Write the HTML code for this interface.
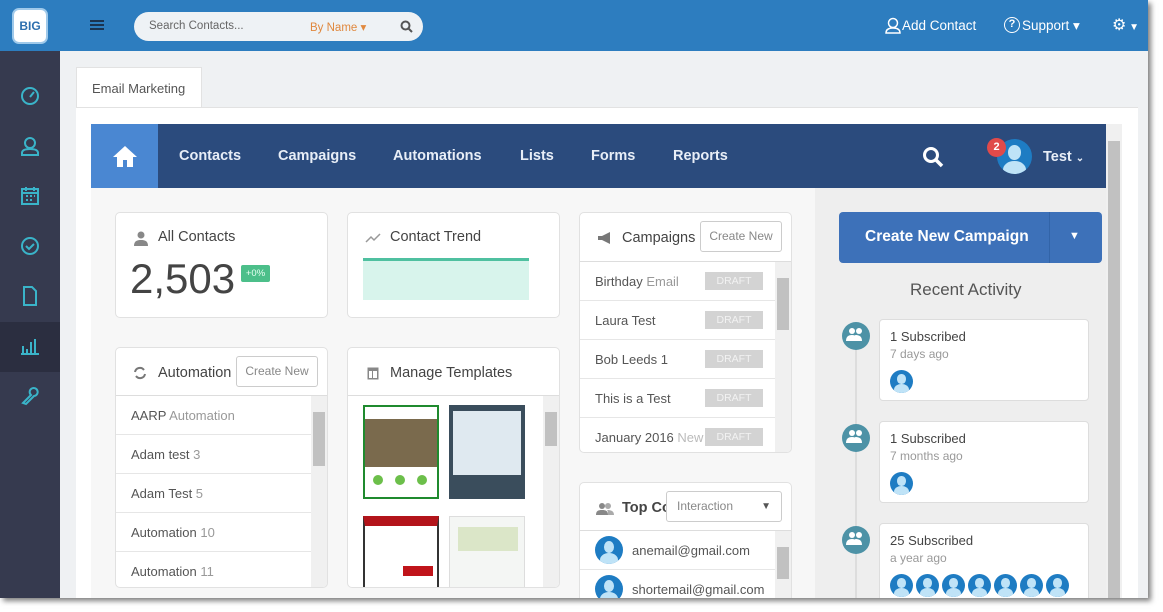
<!DOCTYPE html>
<html><head><meta charset="utf-8"><style>
*{box-sizing:border-box;margin:0;padding:0}
body{width:1163px;height:612px;background:#fff;font-family:"Liberation Sans",sans-serif;position:relative;overflow:hidden}
.frame{position:absolute;left:0;top:0;width:1148px;height:598px;overflow:hidden;background:#eff1f3;box-shadow:3px 3px 5px rgba(0,0,0,.5)}
.a{position:absolute}
.top{left:0;top:0;width:1148px;height:51px;background:#2d7dbf}
.side{left:0;top:51px;width:60px;height:547px;background:#363a4f}
.card{position:absolute;background:#fff;border:1px solid #e1e1e1;border-radius:5px;overflow:hidden}
.ttl{position:absolute;font-size:14.5px;color:#444}
.btn{position:absolute;border:1px solid #ccc;border-radius:3px;background:#fff;color:#888;font-size:12px;text-align:center;line-height:29px}
.row{position:absolute;left:0;height:39px;border-bottom:1px solid #e6e6e6;font-size:13px;color:#555;line-height:39px;padding-left:15px;white-space:nowrap}
.draft{position:absolute;left:125px;top:10px;width:58px;height:18px;background:#d3d3d3;color:#f2f2f2;font-size:10.5px;text-align:center;line-height:18px}
.sb{position:absolute;background:#f0f0f0}
.sb i{position:absolute;left:2px;right:2px;background:#c1c1c1}
.av{position:absolute;border-radius:50%;background:#1e7cc3;overflow:hidden}
.av:before{content:"";position:absolute;left:32%;top:18%;width:36%;height:42%;border-radius:50%;background:#bfe3f7}
.av:after{content:"";position:absolute;left:18%;top:62%;width:64%;height:50%;border-radius:50% 50% 0 0;background:#bfe3f7}
.nav{font-size:14.5px;color:#e8eef7;font-weight:bold;top:148px}
.tl{position:absolute;width:28px;height:28px;border-radius:50%;background:#4d92a6}
.tc{position:absolute;left:879px;width:210px;height:82px;background:#fff;border:1px solid #ddd;border-radius:4px;padding:9px 10px}
.tc b{font-weight:normal;font-size:13px;color:#444;display:block}
.tc s{text-decoration:none;font-size:12px;color:#999;display:block;margin-top:3px}
.si{position:absolute;left:20px}
</style></head><body>
<div class="frame">
<div class="a top"></div>
<div class="a" style="left:12px;top:8px;width:36px;height:36px;border-radius:7px;background:#fff;border:2px solid #9fc9ea;color:#2d6fae;font-size:12px;font-weight:bold;text-align:center;line-height:32px">BIG</div>
<div class="a" style="left:90px;top:20px;width:14px;height:2px;background:#1b3350;box-shadow:0 4px #1b3350,0 8px #1b3350"></div>
<div class="a" style="left:134px;top:12px;width:289px;height:29px;border-radius:15px;background:#eef2f5"></div>
<div class="a" style="left:149px;top:20px;font-size:11.5px;color:#666">Search Contacts...</div>
<div class="a" style="left:310px;top:20px;font-size:11.5px;color:#e0883e">By Name ▾</div>
<svg class="a" style="left:400px;top:20px" width="13" height="13" viewBox="0 0 13 13"><circle cx="5.5" cy="5.5" r="4" fill="none" stroke="#555" stroke-width="2"/><path d="M8.5 8.5 12 12" stroke="#555" stroke-width="2"/></svg>
<svg class="a" style="left:885px;top:17px" width="16" height="17" viewBox="0 0 16 17"><circle cx="8" cy="6" r="4.5" fill="none" stroke="#fff" stroke-width="1.5"/><path d="M1 16c0-4 3-5 7-5s7 1 7 5z" fill="none" stroke="#fff" stroke-width="1.5"/></svg>
<div class="a" style="left:902px;top:18px;font-size:13.5px;color:#fff">Add Contact</div>
<div class="a" style="left:1004px;top:17px;width:16px;height:16px;border:1.5px solid #fff;border-radius:50%;color:#fff;font-size:11px;text-align:center;line-height:13px;font-weight:bold">?</div>
<div class="a" style="left:1022px;top:18px;font-size:13.5px;color:#fff">Support ▾</div>
<div class="a" style="left:1112px;top:15px;font-size:16px;color:#fff">⚙<span style="font-size:10px"> ▼</span></div>
<div class="a side"></div>
<div class="a" style="left:0;top:322px;width:60px;height:50px;background:#2b2e40"></div>
<svg class="si" style="top:86px" width="20" height="20" viewBox="0 0 20 20" fill="none" stroke="#3ab4c9" stroke-width="2"><circle cx="10" cy="10" r="8"/><path d="M10 11l4-5"/></svg>
<svg class="si" style="top:136px" width="20" height="20" viewBox="0 0 20 20" fill="none" stroke="#3ab4c9" stroke-width="2"><circle cx="10" cy="7" r="5"/><path d="M2 19v-2c0-3 4-4 8-4s8 1 8 4v2z"/></svg>
<svg class="si" style="top:186px" width="20" height="20" viewBox="0 0 20 20" fill="none" stroke="#3ab4c9" stroke-width="2"><rect x="2" y="3" width="16" height="15"/><path d="M2 7h16M6 1v4M14 1v4M6 10h2M10 10h2M14 10h1M6 14h2M10 14h2"/></svg>
<svg class="si" style="top:236px" width="20" height="20" viewBox="0 0 20 20" fill="none" stroke="#3ab4c9" stroke-width="2"><circle cx="10" cy="10" r="8"/><path d="M6 10l3 3 5-5"/></svg>
<svg class="si" style="top:286px" width="20" height="20" viewBox="0 0 20 20" fill="none" stroke="#3ab4c9" stroke-width="2"><path d="M4 1h8l4 4v14H4z"/></svg>
<svg class="si" style="top:336px" width="20" height="20" viewBox="0 0 20 20" fill="none" stroke="#3ab4c9" stroke-width="2"><path d="M1 18h18M3 10v8M7 13v5M11 6v12M15 3v15"/></svg>
<svg class="si" style="top:386px" width="20" height="20" viewBox="0 0 20 20" fill="none" stroke="#3ab4c9" stroke-width="2"><path d="M3 17l8-8a4 4 0 1 1 3 1l-8 8z"/></svg>
<div class="a" style="left:76px;top:67px;width:126px;height:41px;background:#fff;border:1px solid #e2e2e2;border-bottom:none;font-size:13px;color:#555;padding:13px 0 0 15px">Email Marketing</div>
<div class="a" style="left:76px;top:107px;width:1062px;height:500px;background:#fff;border-top:1px solid #e2e2e2"></div>
<div class="a" style="left:91px;top:124px;width:1015px;height:64px;background:#2b4b7d"></div>
<div class="a" style="left:91px;top:124px;width:67px;height:64px;background:#4a87d2"></div>
<svg class="a" style="left:112px;top:144px" width="26" height="24" viewBox="0 0 26 24"><path d="M13 2 1 13h4v10h6v-7h4v7h6V13h4z" fill="#fff"/></svg>
<div class="a nav" style="left:179px">Contacts</div>
<div class="a nav" style="left:278px">Campaigns</div>
<div class="a nav" style="left:393px">Automations</div>
<div class="a nav" style="left:520px">Lists</div>
<div class="a nav" style="left:591px">Forms</div>
<div class="a nav" style="left:673px">Reports</div>
<svg class="a" style="left:922px;top:146px" width="22" height="22" viewBox="0 0 22 22"><circle cx="9" cy="9" r="6.5" fill="none" stroke="#fff" stroke-width="3"/><path d="M14 14l6 6" stroke="#fff" stroke-width="3.5"/></svg>
<div class="av" style="left:997px;top:139px;width:35px;height:35px"></div>
<div class="a" style="left:987px;top:138px;width:19px;height:19px;border-radius:50%;background:#e04a4a;color:#fff;font-size:11px;font-weight:bold;text-align:center;line-height:19px">2</div>
<div class="a nav" style="left:1043px;top:149px">Test <span style="font-size:10px">⌄</span></div>
<div class="a" style="left:1106px;top:124px;width:16px;height:480px;background:#f0f0f0"></div>
<div class="a" style="left:1108px;top:141px;width:12px;height:470px;background:#c1c1c1"></div>
<div class="a" style="left:91px;top:188px;width:724px;height:420px;background:#f7f7f7"></div>
<div class="a" style="left:815px;top:188px;width:291px;height:420px;background:#eeeeee"></div>

<div class="card" style="left:115px;top:212px;width:213px;height:106px">
<svg class="a" style="left:18px;top:18px" width="14" height="15" viewBox="0 0 14 15"><circle cx="7" cy="4" r="3.5" fill="#888"/><path d="M0 15c0-5 3-6 7-6s7 1 7 6z" fill="#888"/></svg>
<div class="ttl" style="left:42px;top:16px">All Contacts</div>
<div class="a" style="left:14px;top:42px;font-size:42px;color:#444">2,503</div>
<div class="a" style="left:125px;top:52px;width:29px;height:17px;background:#4cbf8a;color:#e8fff2;font-size:9.5px;text-align:center;line-height:17px;border-radius:2px">+0%</div>
</div>
<div class="card" style="left:347px;top:212px;width:213px;height:106px">
<svg class="a" style="left:17px;top:20px" width="16" height="10" viewBox="0 0 16 10"><path d="M1 9l5-5 3 3 6-6" fill="none" stroke="#999" stroke-width="1.5"/></svg>
<div class="ttl" style="left:42px;top:16px">Contact Trend</div>
<div class="a" style="left:15px;top:45px;width:166px;height:42px;background:#d8f4ec;border-top:3px solid #4fc0a0"></div>
</div>

<div class="card" style="left:579px;top:212px;width:213px;height:241px">
<svg class="a" style="left:17px;top:18px" width="16" height="14" viewBox="0 0 16 14"><path d="M1 5h4l8-4v12L5 9H1z" fill="#777"/></svg>
<div class="ttl" style="left:42px;top:17px">Campaigns</div>
<div class="btn" style="left:120px;top:8px;width:82px;height:31px">Create New</div>
<div class="a" style="left:0;top:48px;width:213px;border-top:1px solid #ddd"></div>
<div class="row" style="top:49px;width:195px">Birthday <span style="color:#999">Email</span><div class="draft">DRAFT</div></div>
<div class="row" style="top:88px;width:195px">Laura Test<div class="draft">DRAFT</div></div>
<div class="row" style="top:127px;width:195px">Bob Leeds 1<div class="draft">DRAFT</div></div>
<div class="row" style="top:166px;width:195px">This is a Test<div class="draft">DRAFT</div></div>
<div class="row" style="top:205px;width:195px;border:none">January 2016 <span style="color:#bbb">New</span><div class="draft">DRAFT</div></div>
<div class="sb" style="left:195px;top:49px;width:16px;height:190px"><i style="top:16px;height:52px"></i></div>
</div>

<div class="card" style="left:115px;top:347px;width:213px;height:241px">
<svg class="a" style="left:17px;top:18px" width="14" height="14" viewBox="0 0 14 14" fill="none" stroke="#777" stroke-width="2"><path d="M2 6a5 5 0 0 1 9-2M12 8a5 5 0 0 1-9 2"/></svg>
<div class="ttl" style="left:42px;top:17px">Automation</div>
<div class="btn" style="left:120px;top:8px;width:82px;height:31px;background:#fff">Create New</div>
<div class="a" style="left:0;top:47px;width:213px;border-top:1px solid #ddd"></div>
<div class="row" style="top:48px;width:195px">AARP <span style="color:#999">Automation</span></div>
<div class="row" style="top:87px;width:195px">Adam test <span style="color:#999">3</span></div>
<div class="row" style="top:126px;width:195px">Adam Test <span style="color:#999">5</span></div>
<div class="row" style="top:165px;width:195px">Automation <span style="color:#999">10</span></div>
<div class="row" style="top:204px;width:195px">Automation <span style="color:#999">11</span></div>
<div class="sb" style="left:195px;top:48px;width:16px;height:192px"><i style="top:16px;height:54px"></i></div>
</div>

<div class="card" style="left:347px;top:347px;width:213px;height:241px">
<svg class="a" style="left:19px;top:19px" width="12" height="13" viewBox="0 0 12 13"><rect x="0.5" y="0.5" width="11" height="12" fill="#888"/><rect x="2" y="4" width="3" height="7" fill="#fff"/><rect x="6" y="4" width="4" height="7" fill="#fff"/></svg>
<div class="ttl" style="left:42px;top:17px">Manage Templates</div>
<div class="a" style="left:0;top:47px;width:213px;border-top:1px solid #ddd"></div>
<div class="a" style="left:15px;top:57px;width:76px;height:94px;background:#fff;border:2px solid #1f8a2e">
<div class="a" style="left:0;top:12px;width:72px;height:48px;background:#7a6a4d"></div>
<div class="a" style="left:8px;top:68px;width:10px;height:10px;border-radius:50%;background:#6cbf4a;box-shadow:22px 0 #6cbf4a,44px 0 #6cbf4a"></div></div>
<div class="a" style="left:101px;top:57px;width:76px;height:94px;background:#3a4d5c"><div class="a" style="left:4px;top:6px;width:68px;height:64px;background:#dfe9f0"></div></div>
<div class="a" style="left:15px;top:168px;width:76px;height:80px;background:#fff;border:2px solid #333;border-top:10px solid #b3141a"><div class="a" style="left:38px;top:40px;width:30px;height:10px;background:#c0141a"></div></div>
<div class="a" style="left:101px;top:168px;width:76px;height:80px;background:#f4f6f4;border:1px solid #ddd"><div class="a" style="left:8px;top:10px;width:60px;height:24px;background:#dbe6c8"></div></div>
<div class="sb" style="left:195px;top:48px;width:16px;height:192px"><i style="top:16px;height:34px"></i></div>
</div>

<div class="card" style="left:579px;top:482px;width:213px;height:140px">
<svg class="a" style="left:16px;top:19px" width="18" height="13" viewBox="0 0 18 13"><circle cx="6" cy="4" r="3" fill="#888"/><circle cx="12" cy="4" r="3" fill="#aaa"/><path d="M0 13c0-4 2-5 6-5s6 1 6 5z" fill="#888"/><path d="M12 13c0-3 0-4-1-5 4 0 7 1 7 5z" fill="#aaa"/></svg>
<div class="ttl" style="left:42px;top:17px;font-weight:bold">Top Co</div>
<div class="btn" style="left:86px;top:8px;width:116px;height:31px;text-align:left;padding-left:10px">Interaction<span style="position:absolute;right:10px;color:#555;font-size:10px">▼</span></div>
<div class="a" style="left:0;top:47px;width:213px;border-top:1px solid #ddd"></div>
<div class="row" style="top:48px;width:195px;padding-left:52px;height:39px">anemail@gmail.com</div>
<div class="av" style="left:15px;top:53px;width:28px;height:28px"></div>
<div class="row" style="top:87px;width:195px;padding-left:52px">shortemail@gmail.com</div>
<div class="av" style="left:15px;top:92px;width:28px;height:28px"></div>
<div class="sb" style="left:195px;top:48px;width:16px;height:92px"><i style="top:16px;height:32px"></i></div>
</div>

<div class="a" style="left:839px;top:212px;width:263px;height:51px;background:#3d71b9;border-radius:4px"></div>
<div class="a" style="left:1049px;top:212px;width:1px;height:51px;background:#3264a8"></div>
<div class="a" style="left:865px;top:228px;font-size:15.5px;font-weight:bold;color:#fff">Create New Campaign</div>
<div class="a" style="left:1069px;top:230px;font-size:11px;color:#fff">▼</div>
<div class="a" style="left:910px;top:280px;font-size:17px;color:#555">Recent Activity</div>
<div class="a" style="left:855px;top:336px;width:2px;height:280px;background:#ddd"></div>
<svg width="0" height="0" style="position:absolute"><defs><g id="pp"><circle cx="9" cy="9" r="3" fill="#fff"/><circle cx="16" cy="9" r="3" fill="#fff"/><path d="M3 19c0-4 2-6 6-6s6 2 6 6z M13 19c0-3 0-4-1-6 4 0 7 1 7 6z" fill="#fff"/></g></defs></svg>
<div class="tl" style="left:842px;top:322px"><svg width="28" height="28" viewBox="0 0 28 28"><use href="#pp" x="1" y="0"/></svg></div>
<div class="tc" style="top:319px"><b>1 Subscribed</b><s>7 days ago</s><div class="av" style="left:10px;top:50px;width:23px;height:23px"></div></div>
<div class="tl" style="left:842px;top:424px"><svg width="28" height="28" viewBox="0 0 28 28"><use href="#pp" x="1" y="0"/></svg></div>
<div class="tc" style="top:421px"><b>1 Subscribed</b><s>7 months ago</s><div class="av" style="left:10px;top:50px;width:23px;height:23px"></div></div>
<div class="tl" style="left:842px;top:526px"><svg width="28" height="28" viewBox="0 0 28 28"><use href="#pp" x="1" y="0"/></svg></div>
<div class="tc" style="top:523px"><b>25 Subscribed</b><s>a year ago</s>
<div class="av" style="left:10px;top:50px;width:23px;height:23px"></div><div class="av" style="left:36px;top:50px;width:23px;height:23px"></div><div class="av" style="left:62px;top:50px;width:23px;height:23px"></div><div class="av" style="left:88px;top:50px;width:23px;height:23px"></div><div class="av" style="left:114px;top:50px;width:23px;height:23px"></div><div class="av" style="left:140px;top:50px;width:23px;height:23px"></div><div class="av" style="left:166px;top:50px;width:23px;height:23px"></div></div>
</div>
</body></html>
